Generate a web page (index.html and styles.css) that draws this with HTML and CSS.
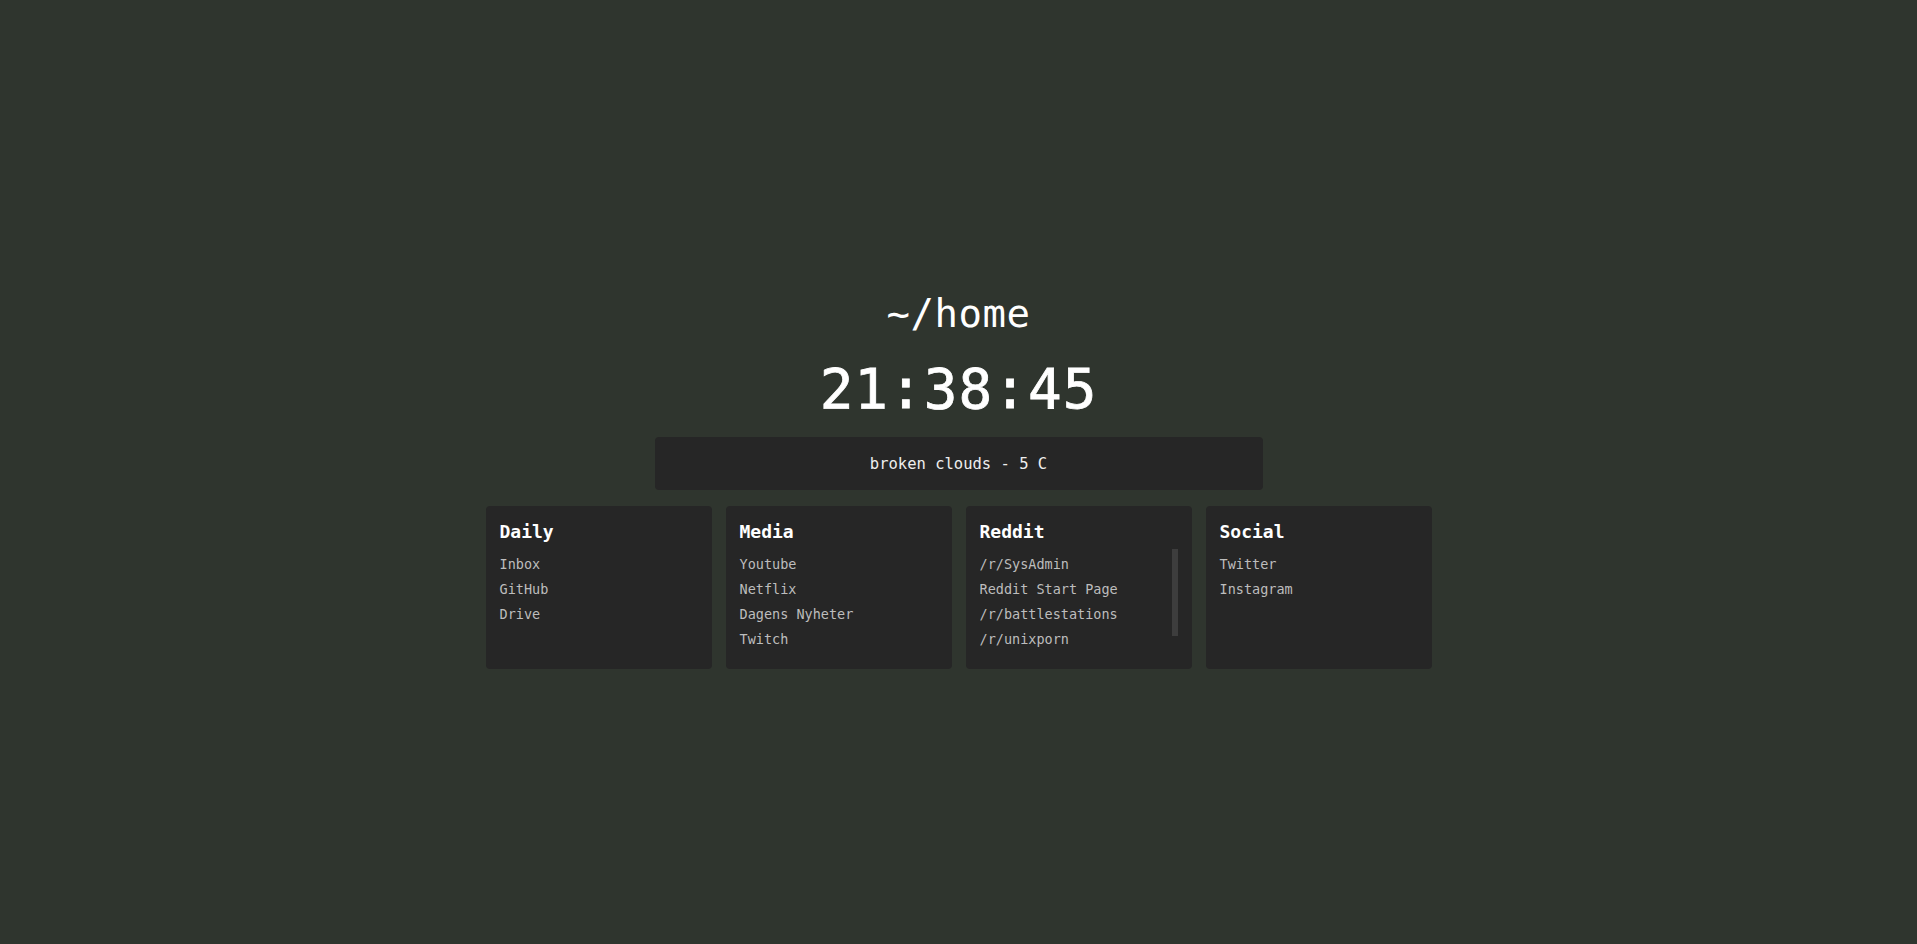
FILE: index.html
```html
<!DOCTYPE html>
<html lang="en">
<head>
<meta charset="utf-8">
<title>~/home</title>
<link rel="stylesheet" href="styles.css">
</head>
<body>
<main class="page">
  <h1 class="title">~/home</h1>
  <div class="clock">21:38:45</div>
  <div class="weather">broken clouds - 5 C</div>
  <section class="cards">
    <div class="card">
      <h2 class="card-title">Daily</h2>
      <ul class="links">
        <li><a href="#">Inbox</a></li>
        <li><a href="#">GitHub</a></li>
        <li><a href="#">Drive</a></li>
      </ul>
    </div>
    <div class="card">
      <h2 class="card-title">Media</h2>
      <ul class="links">
        <li><a href="#">Youtube</a></li>
        <li><a href="#">Netflix</a></li>
        <li><a href="#">Dagens Nyheter</a></li>
        <li><a href="#">Twitch</a></li>
      </ul>
    </div>
    <div class="card card-scroll">
      <h2 class="card-title">Reddit</h2>
      <ul class="links scroll">
        <li><a href="#">/r/SysAdmin</a></li>
        <li><a href="#">Reddit Start Page</a></li>
        <li><a href="#">/r/battlestations</a></li>
        <li><a href="#">/r/unixporn</a></li>
      </ul>
      <div class="thumb"></div>
    </div>
    <div class="card">
      <h2 class="card-title">Social</h2>
      <ul class="links">
        <li><a href="#">Twitter</a></li>
        <li><a href="#">Instagram</a></li>
      </ul>
    </div>
  </section>
</main>
</body>
</html>
```
FILE: styles.css
```css
html, body {
  margin: 0;
  padding: 0;
}

body {
  background: #2f352e;
  color: #ffffff;
  font-family: "DejaVu Sans Mono", "Liberation Mono", monospace;
  height: 100vh;
  overflow: hidden;
}

.page {
  display: flex;
  flex-direction: column;
  align-items: center;
  padding-top: 290px;
}

.title {
  margin: 0;
  font-size: 39px;
  font-weight: 400;
  line-height: 48px;
  letter-spacing: 0.5px;
}

.clock {
  margin-top: 18px;
  font-size: 56px;
  font-weight: 400;
  line-height: 66px;
  letter-spacing: 1px;
  -webkit-text-stroke: 0.8px #ffffff;
}

.weather {
  margin-top: 15px;
  width: 608px;
  height: 53px;
  background: #262626;
  border-radius: 4px;
  display: flex;
  align-items: center;
  justify-content: center;
  font-size: 15.5px;
  color: #eeeeee;
}

.cards {
  margin-top: 16px;
  display: grid;
  grid-template-columns: repeat(4, 226px);
  gap: 14px;
}

.card {
  height: 163px;
  box-sizing: border-box;
  background: #262626;
  border-radius: 4px;
  padding: 14px 14px 0 14px;
}

.card-scroll {
  position: relative;
}

.card-title {
  margin: 0;
  font-size: 18px;
  font-weight: 700;
  line-height: 24px;
  color: #ffffff;
}

.links {
  list-style: none;
  margin: 8px 0 0 0;
  padding: 0;
}

.links li {
  font-size: 13.5px;
  line-height: 25px;
}

.links a {
  color: #bdbdbd;
  text-decoration: none;
}

.scroll {
  height: 100px;
  overflow: hidden;
  padding-right: 10px;
}

.thumb {
  position: absolute;
  top: 43px;
  right: 14px;
  width: 6px;
  height: 87px;
  background: #3d3d3d;
}
```
